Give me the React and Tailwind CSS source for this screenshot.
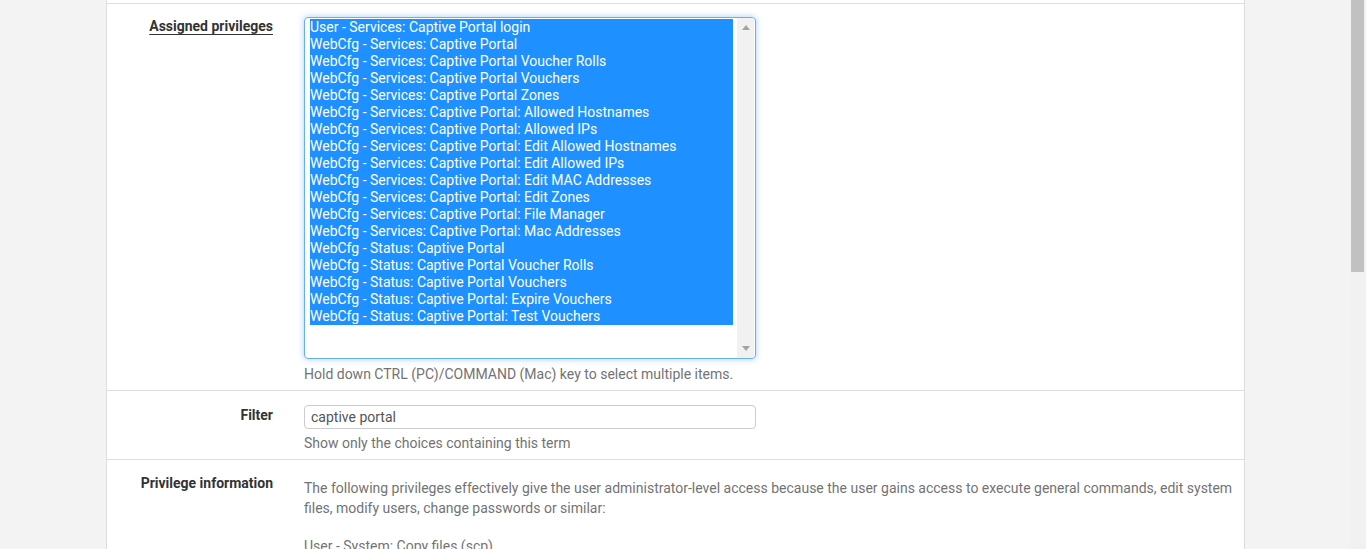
import React from 'react';

const privileges = [
    'User - Services: Captive Portal login',
    'WebCfg - Services: Captive Portal',
    'WebCfg - Services: Captive Portal Voucher Rolls',
    'WebCfg - Services: Captive Portal Vouchers',
    'WebCfg - Services: Captive Portal Zones',
    'WebCfg - Services: Captive Portal: Allowed Hostnames',
    'WebCfg - Services: Captive Portal: Allowed IPs',
    'WebCfg - Services: Captive Portal: Edit Allowed Hostnames',
    'WebCfg - Services: Captive Portal: Edit Allowed IPs',
    'WebCfg - Services: Captive Portal: Edit MAC Addresses',
    'WebCfg - Services: Captive Portal: Edit Zones',
    'WebCfg - Services: Captive Portal: File Manager',
    'WebCfg - Services: Captive Portal: Mac Addresses',
    'WebCfg - Status: Captive Portal',
    'WebCfg - Status: Captive Portal Voucher Rolls',
    'WebCfg - Status: Captive Portal Vouchers',
    'WebCfg - Status: Captive Portal: Expire Vouchers',
    'WebCfg - Status: Captive Portal: Test Vouchers',
];

function Label({ children, underline }) {
    return (
        <div className="w-[181px] shrink-0 pr-[15px] text-right">
            <span className={`font-bold text-[#333] ${underline ? 'underline underline-offset-[3px]' : ''}`}>
                {children}
            </span>
        </div>
    );
}

export default function App() {
    return (
        <div className="flex h-screen overflow-hidden bg-[#f3f3f3] text-[14px] leading-5" style={{ fontFamily: 'Roboto, "Liberation Sans", sans-serif' }}>
            <div className="flex-1">
                <div className="ml-[106px] w-[1139px] h-full bg-white border-x border-[#dddddd]">
                    {/* bottom edge of previous row */}
                    <div className="h-[4px] border-b border-[#dddddd]" />

                    {/* Assigned privileges */}
                    <div className="flex border-b border-[#dddddd] pt-[13px] pb-[6px]">
                        <div className="-mt-[1px]">
                            <Label underline>Assigned privileges</Label>
                        </div>
                        <div className="pl-[16px] flex-1 pr-[4px]">
                            <div className="w-[452px] h-[342px] flex border border-[#66afe9] rounded-[4px] shadow-[0_0_6px_rgba(102,175,233,0.6)] overflow-hidden">
                                <div className="flex-1 pl-[5px] pt-[1px] pr-[4px]">
                                    {privileges.map((p) => (
                                        <div key={p} className="h-[17px] leading-[17px] bg-[#1e90ff] text-white whitespace-nowrap">
                                            {p}
                                        </div>
                                    ))}
                                </div>
                                <div className="w-[17px] mr-[1px] bg-[#f1f1f1] flex flex-col justify-between items-center py-[7px]">
                                    <svg width="8" height="5" viewBox="0 0 8 5"><path d="M0 5 L4 0 L8 5 Z" fill="#a3a3a3" /></svg>
                                    <svg width="8" height="5" viewBox="0 0 8 5"><path d="M0 0 L4 5 L8 0 Z" fill="#a3a3a3" /></svg>
                                </div>
                            </div>
                            <div className="mt-[5px] text-[#737373]">Hold down CTRL (PC)/COMMAND (Mac) key to select multiple items.</div>
                        </div>
                    </div>

                    {/* Filter */}
                    <div className="flex border-b border-[#dddddd] pt-[14px] pb-[6px]">
                        <div>
                            <Label>Filter</Label>
                        </div>
                        <div className="pl-[16px] flex-1 pr-[4px]">
                            <div className="w-[452px] h-[24px] border border-[#cccccc] rounded-[4px] pl-[6px] flex items-center text-[#555]">
                                captive portal
                            </div>
                            <div className="mt-[4px] text-[#737373]">Show only the choices containing this term</div>
                        </div>
                    </div>

                    {/* Privilege information */}
                    <div className="flex pt-[13px]">
                        <div>
                            <Label>Privilege information</Label>
                        </div>
                        <div className="pl-[16px] flex-1 pr-[2px] pt-[5px] text-[#737373]">
                            <p className="mb-[18px]">
                                The following privileges effectively give the user administrator-level access because the user gains access to execute general commands, edit system files, modify users, change passwords or similar:
                            </p>
                            <p>User - System: Copy files (scp)</p>
                        </div>
                    </div>
                </div>
            </div>

            {/* page scrollbar */}
            <div className="w-[16px] h-full bg-[#f1f1f1] pl-[1px] pr-[2px]">
                <div className="h-[272px] bg-[#c1c1c1]" />
            </div>
        </div>
    );
}
